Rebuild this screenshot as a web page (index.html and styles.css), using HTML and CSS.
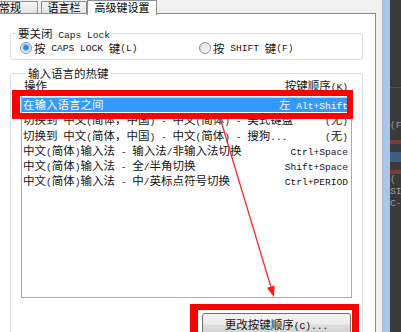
FILE: index.html
```html
<!DOCTYPE html>
<html lang="zh-CN">
<head>
<meta charset="utf-8">
<title>文本服务和输入语言 - 高级键设置</title>
<link rel="stylesheet" href="styles.css">
</head>
<body>
<div class="screen">
  <div class="dialog">
    <div class="tabs">
      <div class="tab t1">常规</div>
      <div class="tab t2">语言栏</div>
      <div class="tab active">高级键设置</div>
    </div>
    <div class="panel">
      <fieldset class="group g1">
        <legend>要关闭<span class="en"> Caps Lock</span></legend>
        <div class="radios">
          <label class="opt first"><span class="radio on"></span>按<span class="en"> CAPS LOCK </span>键<span class="en">(L)</span></label>
          <label class="opt"><span class="radio"></span>按<span class="en"> SHIFT </span>键<span class="en">(F)</span></label>
        </div>
      </fieldset>
      <fieldset class="group g2">
        <legend>输入语言的热键</legend>
        <div class="list-head"><span>操作</span><span>按键顺序<span class="en">(K)</span></span></div>
        <div class="list">
          <div class="row sel"><span>在输入语言之间</span><span>左<span class="en"> Alt+Shift</span></span></div>
          <div class="row"><span>切换到<span class="en"> </span>中文<span class="en">(</span>简体，中国<span class="en">) - </span>中文<span class="en">(</span>简体<span class="en">) - </span>美式键盘</span><span><span class="en">(</span>无<span class="en">)</span></span></div>
          <div class="row"><span>切换到<span class="en"> </span>中文<span class="en">(</span>简体，中国<span class="en">) - </span>中文<span class="en">(</span>简体<span class="en">) - </span>搜狗<span class="en">...</span></span><span><span class="en">(</span>无<span class="en">)</span></span></div>
          <div class="row"><span>中文<span class="en">(</span>简体<span class="en">)</span>输入法<span class="en"> - </span>输入法<span class="en">/</span>非输入法切换</span><span><span class="en">Ctrl+Space</span></span></div>
          <div class="row"><span>中文<span class="en">(</span>简体<span class="en">)</span>输入法<span class="en"> - </span>全<span class="en">/</span>半角切换</span><span><span class="en">Shift+Space</span></span></div>
          <div class="row"><span>中文<span class="en">(</span>简体<span class="en">)</span>输入法<span class="en"> - </span>中<span class="en">/</span>英标点符号切换</span><span><span class="en">Ctrl+PERIOD</span></span></div>
        </div>
        <div class="btn-row">
          <button class="btn" type="button">更改按键顺序<span class="en">(C)...</span></button>
        </div>
      </fieldset>
    </div>
  </div>
  <div class="frame"></div>
  <div class="other">
    <div class="o-top"></div>
    <div class="o-text t-f">(F)</div>
    <div class="o-bar red"></div>
    <div class="o-bar blue"></div>
    <div class="o-bar red"></div>
    <div class="o-text">(</div>
    <div class="o-text">SI</div>
    <div class="o-text">C-</div>
  </div>

  <div class="annot">
    <div class="mark mark1"></div>
    <div class="mark mark2"></div>
    <svg class="arrow" width="401" height="332" viewBox="0 0 401 332">
      <line x1="220.4" y1="119" x2="270.8" y2="286.5" stroke="#ff2a2a" stroke-width="1.3"/>
      <polygon points="266.9,287.7 274.6,285.4 274,297" fill="#ff1a1a"/>
    </svg>
  </div>
</div>
</body>
</html>
```
FILE: styles.css
```css
* {
  box-sizing: border-box;
}

html,
body {
  margin: 0;
  padding: 0;
}

body {
  width: 401px;
  height: 332px;
  overflow: hidden;
  background: #3b3b3b;
  font-family: "Noto Sans CJK SC", "Noto Sans", sans-serif;
  font-size: 11.5px;
  color: #151515;
}

.en {
  font-family: "Liberation Mono", "DejaVu Sans Mono", monospace;
  font-size: 9.6px;
  line-height: 9px;
  white-space: pre;
}

.screen {
  position: relative;
  display: flex;
  width: 401px;
  height: 332px;
  overflow: hidden;
}

/* ---------- dialog ---------- */
.dialog {
  flex: none;
  width: 382px;
  height: 332px;
  background: #f0f0f0;
}

.tabs {
  display: flex;
  align-items: flex-end;
  height: 13px;
}

.tab {
  height: 12px;
  line-height: 11px;
  font-size: 11px;
  color: #000;
  border: 1px solid #8c8e94;
  border-bottom: none;
  background: linear-gradient(#f5f5f5, #e4e4e4);
  text-align: center;
  white-space: nowrap;
}

.tab.t1 {
  width: 42px;
  margin-left: -4px;
  padding-right: 14px;
}

.tab.t2 {
  width: 46px;
  margin-left: 3px;
}

.tab.active {
  position: relative;
  z-index: 1;
  width: 70px;
  height: 15px;
  margin-bottom: -2px;
  line-height: 13px;
  background: #fff;
}

.panel {
  width: 377px;
  height: 319px;
  margin-left: -1px;
  border: 1px solid #898c95;
  border-bottom: none;
  background: #fff;
}

/* ---------- group boxes ---------- */
.group {
  width: 353px;
  min-width: 0;
  margin: 0 0 0 10px;
  padding: 0;
  border: 1px solid #d8dfe6;
  border-radius: 3px;
}

.group legend {
  margin-left: 5px;
  padding: 0 2px;
  height: 14px;
  line-height: 14px;
}

.g1 {
  margin-top: 12px;
}

.radios {
  display: flex;
  height: 14px;
  margin: 1px 0 4px;
  padding-left: 9px;
  line-height: 14px;
}

.opt {
  display: flex;
  align-items: center;
  height: 14px;
  white-space: nowrap;
}

.opt.first {
  width: 179px;
}

.radio {
  flex: none;
  width: 12px;
  height: 12px;
  margin-right: 2px;
  border: 1px solid #8f9193;
  border-radius: 50%;
  background: linear-gradient(135deg, #dcdcdc, #fbfbfb);
}

.radio.on {
  background: radial-gradient(circle at 50% 45%, #2a73c9 0, #3b8ddc 2px, #7ab8ee 3px, #d4e6f7 4px, #f3f3f3 5px);
}

.g2 {
  margin-top: 8px;
  height: 300px;
  padding: 0 10px;
}

.g2 legend {
  height: 11px;
  line-height: 11px;
}

.list-head {
  display: flex;
  justify-content: space-between;
  height: 11px;
  margin-top: 1px;
  padding: 0 4px 0 3px;
  line-height: 11px;
}

.list {
  height: 204px;
  margin-top: 3px;
  padding-top: 2px;
  border: 1px solid #aaadb3;
}

.row {
  display: flex;
  justify-content: space-between;
  height: 15.3px;
  margin-right: 3px;
  padding-left: 1px;
  line-height: 15.3px;
  white-space: nowrap;
}

.row.sel {
  background: #3399ff;
  color: #fff;
  box-shadow: inset 0 1px 0 #c9d2dc;
}

.btn-row {
  display: flex;
  justify-content: flex-end;
  margin-top: 15px;
}

.btn {
  width: 149px;
  height: 23px;
  margin-right: 1px;
  padding: 0;
  border: 1px solid #707070;
  border-radius: 3px;
  background: linear-gradient(#f3f3f3 0, #ececec 48%, #dedede 52%, #d0d0d0 100%);
  font-family: inherit;
  font-size: 11.5px;
  line-height: 21px;
  color: #151515;
}

/* ---------- window frame / background window ---------- */
.frame {
  flex: none;
  width: 8px;
  height: 332px;
  border-left: 1px solid #b9bec6;
  background: #a8c6e9;
}

.other {
  flex: 1;
  height: 332px;
  background: #3a3a3a;
  overflow: hidden;
  color: #9a9a9a;
}

.o-top {
  height: 88px;
  border-bottom: 1px solid #505050;
}

.o-text {
  font-family: "Liberation Mono", monospace;
  font-size: 9.6px;
  line-height: 12px;
  white-space: pre;
}

.t-f {
  margin-top: 32px;
}

.o-bar {
  height: 4px;
  margin-top: 8px;
}

.o-bar.red {
  background: #7d3a3a;
}

.o-bar.blue {
  height: 10px;
  background: #3e5f7f;
}

/* ---------- annotations (overlay) ---------- */
.annot {
  position: absolute;
  inset: 0;
  pointer-events: none;
}

.mark {
  position: absolute;
  border-style: solid;
  border-color: #ff0000;
}

.mark1 {
  left: 12px;
  top: 90px;
  width: 341px;
  height: 29px;
  border-width: 6px 6px 6px 8px;
}

.mark2 {
  left: 190px;
  top: 304px;
  width: 169px;
  height: 40px;
  border-width: 6px 7px 0 8px;
}

.arrow {
  position: absolute;
  left: 0;
  top: 0;
}
```
